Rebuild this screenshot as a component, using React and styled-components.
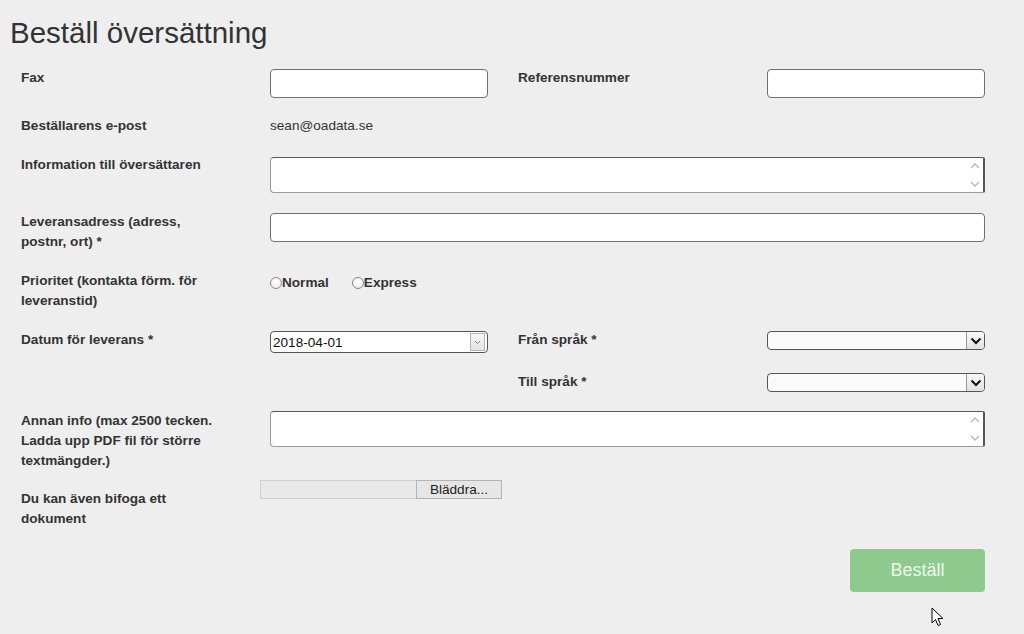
import React from "react";
import styled, { createGlobalStyle } from "styled-components";

const Global = createGlobalStyle`
  html, body { margin: 0; padding: 0; background: #eeeeee; }
  body { font-family: "Liberation Sans", Arial, sans-serif; color: #333; }
  * { box-sizing: border-box; }
`;

const Page = styled.div`
  position: relative;
  width: 1024px;
  min-height: 634px;
  padding: 16px 0 0 0;
  overflow: hidden;
`;

const Title = styled.h1`
  margin: 0 0 19px 10px;
  font-size: 29.5px;
  line-height: 33px;
  font-weight: normal;
  color: #333;
`;

const Form = styled.div`
  padding-left: 21px;
`;

const Row = styled.div`
  display: grid;
  grid-template-columns: 249px 218px 30px 249px 218px;
  align-items: start;
  margin-bottom: ${(p) => p.$gap ?? 19}px;
`;

const Label = styled.div`
  grid-column: ${(p) => p.$col ?? 1};
  max-width: 200px;
  font-size: 13.6px;
  line-height: 20px;
  font-weight: bold;
  color: #333;
`;

const Value = styled.div`
  grid-column: 2;
  font-size: 13.6px;
  line-height: 20px;
  color: #333;
`;

const TextInput = styled.input`
  grid-column: ${(p) => (p.$wide ? "2 / 6" : p.$col ?? 2)};
  margin-top: 1px;
  width: ${(p) => (p.$wide ? "100%" : "218px")};
  height: 29px;
  border: 1px solid #707070;
  border-radius: 4px;
  background: #fff;
  font-family: inherit;
  font-size: 13.6px;
  outline: none;
`;

const AreaWrap = styled.div`
  grid-column: 2 / 6;
  position: relative;
  margin-top: ${(p) => p.$offset ?? 0}px;
  height: 36px;
`;

const TextArea = styled.textarea`
  display: block;
  width: 100%;
  height: 100%;
  resize: none;
  border: 1px solid #9a9a9a;
  border-top-color: #5a5a5a;
  border-right: 2px solid #555;
  border-radius: 4px 2px 2px 4px;
  background: #fff;
  font-family: inherit;
  outline: none;
`;

const ScrollArrows = styled.svg`
  position: absolute;
  right: 4px;
  top: 4px;
  width: 12px;
  height: 28px;
  pointer-events: none;
`;

const RadioGroup = styled.div`
  grid-column: 2 / 5;
  display: flex;
  align-items: center;
  gap: 23px;
  margin-top: 2px;
`;

const RadioLabel = styled.label`
  display: flex;
  align-items: center;
  font-size: 13.6px;
  line-height: 20px;
  font-weight: bold;
  color: #333;
`;

const Radio = styled.input`
  appearance: none;
  margin: 0;
  width: 12px;
  height: 12px;
  border: 1px solid #8a8a8a;
  border-radius: 50%;
  background: radial-gradient(circle at 50% 40%, #ffffff 0%, #f2f2f2 60%, #dcdcdc 100%);
`;

const DateBox = styled.div`
  grid-column: 2;
  margin-top: 1px;
  width: 218px;
  height: 22px;
  display: flex;
  align-items: center;
  border: 1px solid #555;
  border-radius: 4px;
  background: #fff;
  padding: 0 2px 0 2px;
`;

const DateText = styled.span`
  flex: 1;
  padding-top: 1px;
  font-size: 13.6px;
  color: #111;
`;

const DateDrop = styled.span`
  width: 15px;
  height: 18px;
  display: flex;
  align-items: center;
  justify-content: center;
  border: 1px solid #b5b5b5;
  background: linear-gradient(#f6f6f6, #e4e4e4);
`;

const SelectBox = styled.div`
  grid-column: 5;
  margin-top: 1px;
  width: 218px;
  height: 19px;
  display: flex;
  border: 1px solid #555;
  border-radius: 4px;
  background: #fafafa;
  overflow: hidden;
`;

const SelectFill = styled.span`
  flex: 1;
`;

const SelectBtn = styled.span`
  width: 18px;
  display: flex;
  align-items: center;
  justify-content: center;
  border-left: 1px solid #999;
  background: linear-gradient(#f8f8f8, #e2e2e2);
`;

const FileBox = styled.div`
  grid-column: 2 / 4;
  display: flex;
  margin: -9px 0 0 -10px;
  width: 242px;
  height: 19px;
`;

const FilePath = styled.span`
  flex: 1;
  background: #e9e9e9;
  border: 1px solid #cfcfcf;
  border-right: none;
`;

const FileButton = styled.button`
  width: 86px;
  height: 19px;
  padding: 0;
  border: 1px solid #b3b3b3;
  background: #e6e6e6;
  font-family: inherit;
  font-size: 13.6px;
  color: #222;
`;

const Actions = styled.div`
  display: flex;
  justify-content: flex-end;
  width: 964px;
`;

const Submit = styled.button`
  width: 135px;
  height: 43px;
  border: none;
  border-radius: 4px;
  background: #8ec98e;
  color: #eef8ee;
  font-family: inherit;
  font-size: 18px;
`;

const Cursor = styled.svg`
  position: absolute;
  left: 931px;
  top: 607px;
  width: 14px;
  height: 21px;
`;

const Arrows = () => (
  <ScrollArrows viewBox="0 0 12 28">
    <path d="M2 7 L6 3 L10 7" fill="none" stroke="#b8b8b8" strokeWidth="1.4" />
    <path d="M2 21 L6 25 L10 21" fill="none" stroke="#b8b8b8" strokeWidth="1.4" />
  </ScrollArrows>
);

const Chevron = ({ bold }) =>
  bold ? (
    <svg width="12" height="8" viewBox="0 0 12 8">
      <path d="M1.5 1.5 L6 6 L10.5 1.5" fill="none" stroke="#111" strokeWidth="2" />
    </svg>
  ) : (
    <svg width="7" height="5" viewBox="0 0 7 5">
      <path d="M1 1 L3.5 3.5 L6 1" fill="none" stroke="#777" strokeWidth="1" />
    </svg>
  );

export default function App() {
  return (
    <>
      <Global />
      <Page>
        <Title>Beställ översättning</Title>
        <Form>
          <Row $gap={18}>
            <Label>Fax</Label>
            <TextInput />
            <Label $col={4}>Referensnummer</Label>
            <TextInput $col={5} />
          </Row>
          <Row>
            <Label>Beställarens e-post</Label>
            <Value>sean@oadata.se</Value>
          </Row>
          <Row>
            <Label>Information till översättaren</Label>
            <AreaWrap $offset={2}>
              <TextArea />
              <Arrows />
            </AreaWrap>
          </Row>
          <Row>
            <Label>Leveransadress (adress, postnr, ort) *</Label>
            <TextInput $wide />
          </Row>
          <Row>
            <Label>Prioritet (kontakta förm. för leveranstid)</Label>
            <RadioGroup>
              <RadioLabel>
                <Radio type="radio" name="prio" />
                Normal
              </RadioLabel>
              <RadioLabel>
                <Radio type="radio" name="prio" />
                Express
              </RadioLabel>
            </RadioGroup>
          </Row>
          <Row>
            <Label>Datum för leverans *</Label>
            <DateBox>
              <DateText>2018-04-01</DateText>
              <DateDrop>
                <Chevron />
              </DateDrop>
            </DateBox>
            <Label $col={4}>Från språk *</Label>
            <SelectBox>
              <SelectFill />
              <SelectBtn>
                <Chevron bold />
              </SelectBtn>
            </SelectBox>
          </Row>
          <Row>
            <Label $col={4}>Till språk *</Label>
            <SelectBox>
              <SelectFill />
              <SelectBtn>
                <Chevron bold />
              </SelectBtn>
            </SelectBox>
          </Row>
          <Row $gap={18}>
            <Label>Annan info (max 2500 tecken. Ladda upp PDF fil för större textmängder.)</Label>
            <AreaWrap>
              <TextArea />
              <Arrows />
            </AreaWrap>
          </Row>
          <Row $gap={20}>
            <Label>Du kan även bifoga ett dokument</Label>
            <FileBox>
              <FilePath />
              <FileButton>Bläddra...</FileButton>
            </FileBox>
          </Row>
          <Actions>
            <Submit>Beställ</Submit>
          </Actions>
        </Form>
        <Cursor viewBox="0 0 14 21">
          <path
            d="M1 1 L1 16 L4.5 12.5 L7 18.5 L9.5 17.5 L7 11.5 L12 11.5 Z"
            fill="#fff"
            stroke="#000"
            strokeWidth="1"
            strokeLinejoin="round"
          />
        </Cursor>
      </Page>
    </>
  );
}
